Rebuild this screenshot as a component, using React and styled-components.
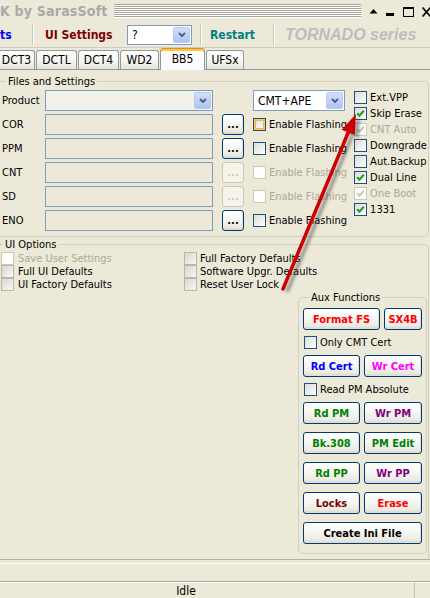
import React from "react";
import styled, { createGlobalStyle, css } from "styled-components";

const FONT = `Tahoma, "DejaVu Sans Condensed", "Liberation Sans", sans-serif`;

const GlobalStyle = createGlobalStyle`
  html, body { margin: 0; padding: 0; background: #ece9d8; }
  body { font-family: ${FONT}; font-size: 11px; color: #000; }
  * { box-sizing: border-box; }
`;

const Window = styled.div`
  position: relative;
  width: 430px;
  height: 598px;
  overflow: hidden;
  display: flex;
  flex-direction: column;
  background: #ece9d8;
`;

/* ---------- caption strip ---------- */
const TitleRow = styled.div`
  height: 22px;
  display: flex;
  align-items: flex-start;
`;
const Caption = styled.div`
  padding-top: 3px;
  font: bold 14px ${FONT};
  letter-spacing: 0.2px;
  color: #a9a9a9;
  white-space: nowrap;
`;
const Gripper = styled.div`
  flex: 1;
  height: 14px;
  margin: 4px 8px 0 6px;
  background: repeating-linear-gradient(to bottom, #a3a39a 0 1px, #fff 1px 2px);
`;
const CaptionIcons = styled.div`
  display: flex;
  gap: 8px;
  padding-top: 7px;
  margin-right: -1px;
`;

/* ---------- toolbar ---------- */
const Toolbar = styled.div`
  height: 26px;
  display: flex;
  align-items: center;
  border-bottom: 1px solid #cfccbd;
`;
const ToolLink = styled.div`
  width: ${(p) => p.$w}px;
  padding-left: ${(p) => p.$pl || 0}px;
  font: bold 12px ${FONT};
  color: ${(p) => p.$color};
  white-space: nowrap;
`;
const ToolSep = styled.div`
  width: 2px;
  height: 21px;
  margin-left: ${(p) => p.$ml || 0}px;
  border-left: 1px solid #cbc8b8;
  border-right: 1px solid #fff;
`;
const Brand = styled.div`
  padding-left: 10px;
  font: italic bold 16px "Liberation Sans", Arial, sans-serif;
  color: #bdbdbd;
  white-space: nowrap;
`;

/* ---------- combo box ---------- */
const Combo = styled.div`
  width: ${(p) => p.$w}px;
  height: ${(p) => p.$h || 21}px;
  display: flex;
  align-items: stretch;
  padding: 1px;
  border: 1px solid #7f9db9;
  background: ${(p) => p.$bg || "#fff"};
`;
const ComboText = styled.span`
  flex: 1;
  display: flex;
  align-items: center;
  padding-left: 3px;
  font-size: 12px;
`;
const DropButton = styled.div`
  width: 17px;
  display: flex;
  align-items: center;
  justify-content: center;
  border-radius: 2px;
  border: 1px solid #b9cbf3;
  background: linear-gradient(180deg, #d2defb 0%, #bccff8 60%, #adc2f2 100%);
`;
const Chevron = () => (
  <svg width="8" height="5" viewBox="0 0 8 5">
    <path d="M1 1 L4 4 L7 1" fill="none" stroke="#4d6185" strokeWidth="2" />
  </svg>
);

/* ---------- tabs ---------- */
const TabStrip = styled.div`
  height: 21px;
  display: flex;
  align-items: flex-end;
  gap: 1px;
  margin-left: -2px;
  position: relative;
  z-index: 1;
`;
const Tab = styled.div`
  width: ${(p) => p.$w}px;
  height: 19px;
  display: flex;
  align-items: center;
  justify-content: center;
  font-size: 12px;
  border: 1px solid #919b9c;
  border-bottom: none;
  border-radius: 3px 3px 0 0;
  background: linear-gradient(180deg, #fff 0%, #f6f6f3 50%, #e5e4dd 100%);
  ${(p) =>
    p.$active &&
    css`
      height: 22px;
      margin-bottom: -1px;
      padding-bottom: 2px;
      border-top: 1px solid #e68b2c;
      box-shadow: inset 0 2px #ffc73c;
      background: #fcfcfe;
    `}
`;

/* ---------- tab page ---------- */
const TabPanel = styled.div`
  height: 491px;
  display: flex;
  flex-direction: column;
  border-top: 1px solid #919b9c;
  border-bottom: 1px solid #b5b2a4;
  padding: 5px 1px 0 0;
  gap: 1px;
`;
const Group = styled.fieldset`
  margin: 0;
  padding: 0;
  min-width: 0;
  border: 1px solid #d0d0bf;
  border-left: none;
  border-radius: 0 5px 5px 0;
  ${(p) =>
    p.$open &&
    css`
      flex: 1;
      border-bottom: none;
      border-radius: 0 5px 0 0;
    `}
`;
const GroupTitle = styled.legend`
  margin-left: ${(p) => p.$indent}px;
  padding: 0 2px;
  font-size: 11px;
  line-height: 13px;
`;

const FilesBody = styled.div`
  display: flex;
  padding: 2px 0 5px;
`;
const FileRows = styled.div`
  display: flex;
  flex-direction: column;
  gap: 3px;
`;
const FileRow = styled.div`
  height: 21px;
  display: flex;
  align-items: center;
`;
const FieldLabel = styled.div`
  width: 45px;
  padding-left: 2px;
  font-size: 11px;
`;
const TextBox = styled.div`
  width: 168px;
  height: 21px;
  border: 1px solid #7f9db9;
  background: #ece9d8;
`;
const Spacer = styled.div`
  width: ${(p) => p.$w}px;
  flex: none;
`;

const XPButton = styled.button`
  width: ${(p) => p.$w}px;
  height: ${(p) => p.$h || 22}px;
  padding: 0;
  margin: 0 0 0 ${(p) => p.$ml || 0}px;
  border: 1px solid #003c74;
  border-radius: 3px;
  background: linear-gradient(180deg, #ffffff 0%, #f5f5f1 50%, #ebe9e1 85%, #d8d3c8 100%);
  box-shadow: inset -1px -1px 0 #e0ddd2;
  font: bold 11px ${FONT};
  color: ${(p) => p.$color || "#000"};
  white-space: nowrap;
  &:disabled {
    border-color: #c9c7ba;
    background: #f5f4ea;
    box-shadow: none;
    color: #c9c7ba;
  }
`;

const FlagColumn = styled.div`
  display: flex;
  flex-direction: column;
  gap: 3px;
  margin-left: 7px;
  padding-top: 1px;
`;

/* ---------- check boxes ---------- */
const CheckLabel = styled.label`
  height: 13px;
  display: flex;
  align-items: center;
  gap: ${(p) => p.$gap ?? 3}px;
  margin-left: ${(p) => p.$ml || 0}px;
  font-size: 11px;
  white-space: nowrap;
  color: ${(p) => (p.$disabled ? "#aca899" : "#000")};
`;
const Box = styled.span`
  width: 13px;
  height: 13px;
  flex: none;
  display: flex;
  align-items: center;
  justify-content: center;
  border: 1px solid #1c5180;
  background: linear-gradient(135deg, #dcdcd7 0%, #f4f4f1 70%, #fff 100%);
  ${(p) =>
    p.$hot &&
    css`
      box-shadow: inset 0 0 0 1px #fbc761, inset 0 0 0 2px #f6b342;
    `}
  ${(p) =>
    p.$flat &&
    css`
      border-color: #b8b6ad;
      background: linear-gradient(135deg, #d8d7d0 0%, #ebeae5 60%, #f7f7f4 100%);
    `}
  ${(p) =>
    p.$disabled &&
    css`
      border-color: #cac8bb;
      background: #fff;
    `}
`;
const Tick = ({ color }) => (
  <svg width="9" height="9" viewBox="0 0 9 9">
    <path d="M1.2 4.2 L3.4 6.6 L7.8 1.8" fill="none" stroke={color} strokeWidth="2.1" />
  </svg>
);

function Check({ label, checked, disabled, hot, flat, ml, gap }) {
  return (
    <CheckLabel $disabled={disabled} $ml={ml} $gap={gap}>
      <Box $disabled={disabled} $hot={hot} $flat={flat}>
        {checked && <Tick color={disabled ? "#cac8bb" : "#21a121"} />}
      </Box>
      {label}
    </CheckLabel>
  );
}

/* ---------- UI options ---------- */
const OptionsBody = styled.div`
  display: flex;
  flex-direction: column;
  padding: 1px 1px 0 0;
`;
const OptionColumns = styled.div`
  display: flex;
`;
const OptionColumn = styled.div`
  width: ${(p) => p.$w || "auto"};
  display: flex;
  flex-direction: column;
  padding-left: ${(p) => p.$pl || 0}px;
`;
const AuxRow = styled.div`
  display: flex;
  justify-content: flex-end;
`;
const AuxGroup = styled.fieldset`
  width: 129px;
  height: 263px;
  margin: 0;
  padding: 4px 4px 0 4px;
  min-width: 0;
  border: 1px solid #d0d0bf;
  border-radius: 5px;
  display: flex;
  flex-direction: column;
  gap: 6px;
`;
const AuxTitle = styled.legend`
  margin-left: 6px;
  padding: 0 2px;
  font-size: 11px;
  line-height: 13px;
`;
const ButtonRow = styled.div`
  display: flex;
  gap: 4px;
`;
const ButtonStack = styled.div`
  display: flex;
  flex-direction: column;
  gap: 8px;
`;

/* ---------- bottom bars ---------- */
const ProgressArea = styled.div`
  height: 18px;
  margin-top: 3px;
  border-top: 1px solid #fff;
`;
const StatusBar = styled.div`
  flex: 1;
  display: flex;
  border-top: 1px solid #aca899;
  box-shadow: inset 0 1px #fff;
`;
const StatusPane = styled.div`
  width: 415px;
  padding: 2px 42px 0 0;
  text-align: center;
  font-size: 12px;
  border-right: 1px solid #c5c2b2;
`;

const ArrowLayer = styled.svg`
  position: absolute;
  left: 0;
  top: 0;
  pointer-events: none;
`;

const tabs = [
  ["DCT3", 37],
  ["DCTL", 41],
  ["DCT4", 41],
  ["WD2", 39],
  ["BB5", 45, true],
  ["UFSx", 38],
];

const fileRows = [
  { name: "COR", enabled: true, hot: true },
  { name: "PPM", enabled: true },
  { name: "CNT", enabled: false },
  { name: "SD", enabled: false },
  { name: "ENO", enabled: true },
];

const flags = [
  { label: "Ext.VPP" },
  { label: "Skip Erase", checked: true },
  { label: "CNT Auto", checked: true, disabled: true },
  { label: "Downgrade" },
  { label: "Aut.Backup" },
  { label: "Dual Line", checked: true },
  { label: "One Boot", checked: true, disabled: true },
  { label: "1331", checked: true },
];

const pairs = [
  [["Rd PM", "#008000"], ["Wr PM", "#800080"]],
  [["Bk.308", "#008000"], ["PM Edit", "#008000"]],
  [["Rd PP", "#008000"], ["Wr PP", "#800080"]],
  [["Locks", "#800000"], ["Erase", "#ff0000"]],
];

export default function App() {
  return (
    <>
      <GlobalStyle />
      <Window>
        <TitleRow>
          <Caption>K by SarasSoft</Caption>
          <Gripper />
          <CaptionIcons>
            <svg width="9" height="10" viewBox="0 0 9 10">
              <path d="M0.5 6.5 L4.5 2 L8.5 6.5 Z" fill="#000" />
            </svg>
            <svg width="9" height="10" viewBox="0 0 9 10">
              <rect x="0" y="6" width="8" height="3" fill="#000" />
            </svg>
            <svg width="11" height="10" viewBox="0 0 11 10">
              <rect x="0.5" y="1" width="10" height="8.5" fill="none" stroke="#000" />
              <rect x="0" y="0" width="11" height="2" fill="#000" />
            </svg>
            <svg width="9" height="10" viewBox="0 0 9 10">
              <path d="M0.5 0.5 L8.5 9.5 M8.5 0.5 L0.5 9.5" stroke="#000" strokeWidth="1.6" />
            </svg>
          </CaptionIcons>
        </TitleRow>

        <Toolbar>
          <ToolLink $w={32} $color="#0000ff">ts</ToolLink>
          <ToolSep />
          <ToolLink $w={93} $pl={11} $color="#800000">UI Settings</ToolLink>
          <Combo $w={65} $h={20}>
            <ComboText>?</ComboText>
            <DropButton><Chevron /></DropButton>
          </Combo>
          <ToolSep $ml={8} />
          <ToolLink $w={71} $pl={8} $color="#008080">Restart</ToolLink>
          <ToolSep />
          <Brand>TORNADO series</Brand>
        </Toolbar>

        <TabStrip>
          {tabs.map(([name, w, active]) => (
            <Tab key={name} $w={w} $active={active}>{name}</Tab>
          ))}
        </TabStrip>

        <TabPanel>
          <Group>
            <GroupTitle $indent={6}>Files and Settings</GroupTitle>
            <FilesBody>
              <FileRows>
                <FileRow>
                  <FieldLabel>Product</FieldLabel>
                  <Combo $w={168} $bg="#f3f2ea">
                    <ComboText />
                    <DropButton><Chevron /></DropButton>
                  </Combo>
                  <Spacer $w={40} />
                  <Combo $w={92}>
                    <ComboText>CMT+APE</ComboText>
                    <DropButton><Chevron /></DropButton>
                  </Combo>
                </FileRow>
                {fileRows.map((r) => (
                  <FileRow key={r.name}>
                    <FieldLabel>{r.name}</FieldLabel>
                    <TextBox />
                    <XPButton $w={22} $h={21} $ml={9} disabled={!r.enabled}>...</XPButton>
                    <Check label="Enable Flashing" disabled={!r.enabled} hot={r.hot} ml={9} />
                  </FileRow>
                ))}
              </FileRows>
              <FlagColumn>
                {flags.map((f) => (
                  <Check key={f.label} {...f} />
                ))}
              </FlagColumn>
            </FilesBody>
          </Group>

          <Group $open>
            <GroupTitle $indent={3}>UI Options</GroupTitle>
            <OptionsBody>
              <OptionColumns>
                <OptionColumn $w="184px" $pl={1}>
                  <Check label="Save User Settings" disabled flat gap={4} />
                  <Check label="Full UI Defaults" flat gap={4} />
                  <Check label="UI Factory Defaults" flat gap={4} />
                </OptionColumn>
                <OptionColumn>
                  <Check label="Full Factory Defaults" flat />
                  <Check label="Software Upgr. Defaults" flat />
                  <Check label="Reset User Lock" flat />
                </OptionColumn>
              </OptionColumns>
              <AuxRow>
                <AuxGroup>
                  <AuxTitle>Aux Functions</AuxTitle>
                  <ButtonRow>
                    <XPButton $w={77} $color="#ff0000">Format FS</XPButton>
                    <XPButton $w={38} $color="#ff0000">SX4B</XPButton>
                  </ButtonRow>
                  <Check label="Only CMT Cert" ml={1} />
                  <ButtonRow>
                    <XPButton $w={57} $color="#0000ff">Rd Cert</XPButton>
                    <XPButton $w={58} $color="#ff00ff">Wr Cert</XPButton>
                  </ButtonRow>
                  <Check label="Read PM Absolute" ml={1} />
                  <ButtonStack>
                    {pairs.map(([a, b]) => (
                      <ButtonRow key={a[0]}>
                        <XPButton $w={57} $color={a[1]}>{a[0]}</XPButton>
                        <XPButton $w={58} $color={b[1]}>{b[0]}</XPButton>
                      </ButtonRow>
                    ))}
                    <XPButton $w={119}>Create Ini File</XPButton>
                  </ButtonStack>
                </AuxGroup>
              </AuxRow>
            </OptionsBody>
          </Group>
        </TabPanel>

        <ProgressArea />
        <StatusBar>
          <StatusPane>Idle</StatusPane>
        </StatusBar>

        <ArrowLayer width="430" height="598" viewBox="0 0 430 598">
          <defs>
            <filter id="arrowShade" x="-20%" y="-20%" width="140%" height="140%">
              <feGaussianBlur stdDeviation="1.6" />
            </filter>
          </defs>
          <g transform="translate(4 3)" filter="url(#arrowShade)" opacity="0.5">
            <line x1="283" y1="289" x2="348" y2="133" stroke="#404040" strokeWidth="3.5" />
            <polygon points="356,114 341.7,129.7 354.6,135.1" fill="#404040" />
          </g>
          <line x1="283" y1="289" x2="348" y2="133" stroke="#cc0000" strokeWidth="3.5" strokeLinecap="round" />
          <polygon points="356,114 341.7,129.7 354.6,135.1" fill="#cc0000" />
        </ArrowLayer>
      </Window>
    </>
  );
}
